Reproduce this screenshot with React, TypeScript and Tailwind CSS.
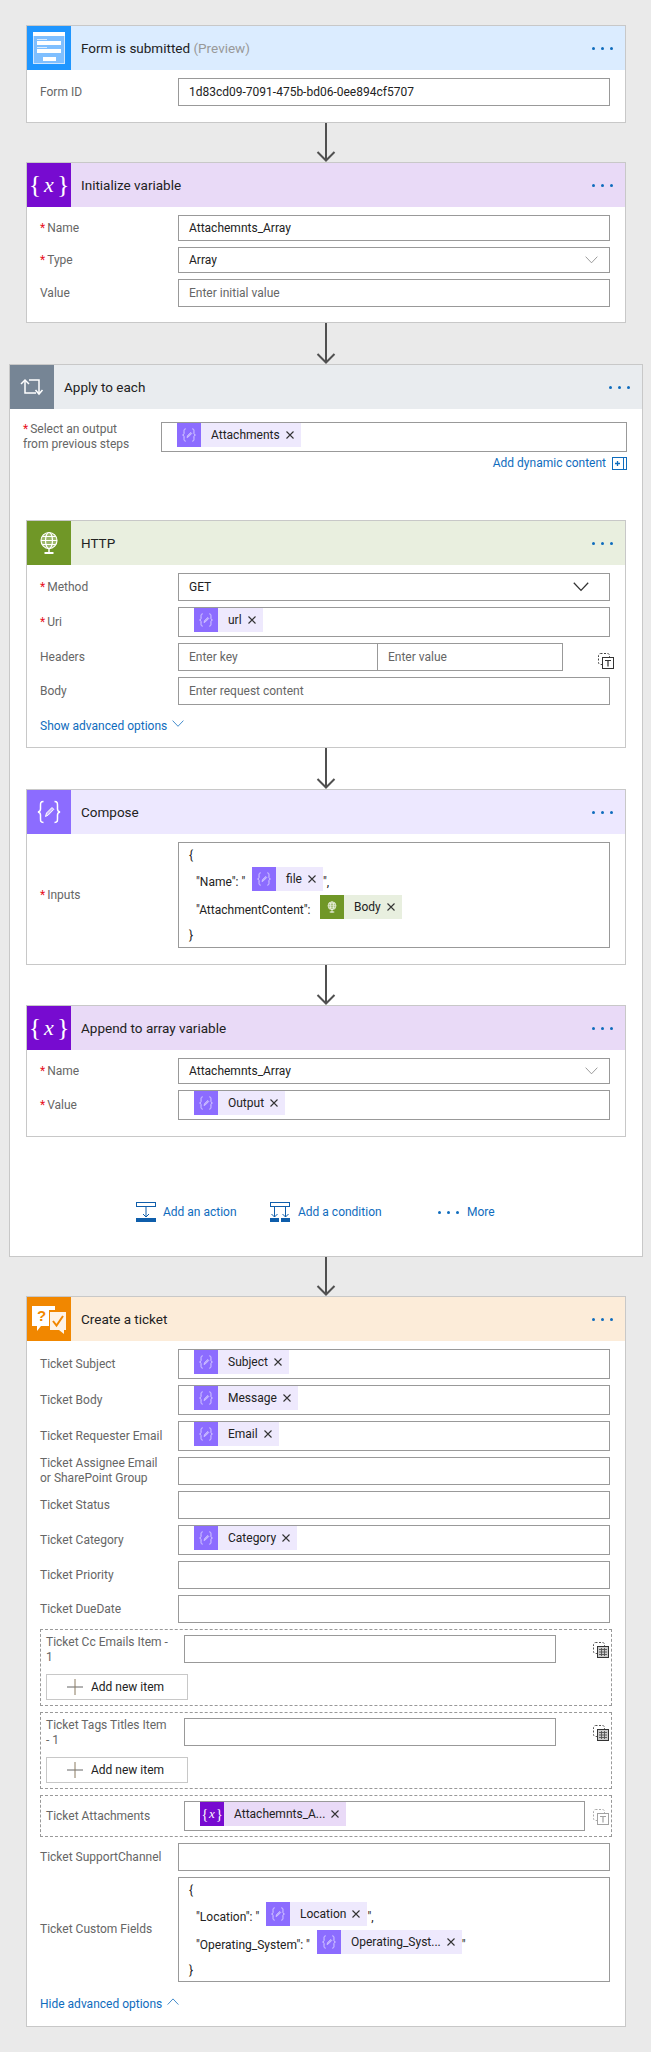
import React from 'react';

const FONT = "font-['Roboto',sans-serif]";

const Dots = () => (
    <div className="flex gap-[6px] pr-3">
        <div className="w-[3px] h-[3px] rounded-full bg-[#0f6cbd]"></div>
        <div className="w-[3px] h-[3px] rounded-full bg-[#0f6cbd]"></div>
        <div className="w-[3px] h-[3px] rounded-full bg-[#0f6cbd]"></div>
    </div>
);

const Arrow = ({ h }: { h: number }) => (
    <div className="flex justify-center pl-[1px]">
        <svg width="20" height={h} viewBox={`0 0 20 ${h}`} fill="none" stroke="#505050" strokeWidth="2">
            <path d={`M10 0V${h - 1}`} />
            <path d={`M1.5 ${h - 10}L10 ${h - 1.5}L18.500 ${h - 10}`} />
        </svg>
    </div>
);

const Braces = ({ size, color = 'white', op = 1 }: { size: number; color?: string; op?: number }) => (
    <svg width={size} height={size} viewBox="0 0 24 24" fill="none" stroke={color} strokeWidth="1.5" opacity={op}>
        <path d="M6.500 1.500C3.500 1.500 3.500 3 3.500 5.500V9C3.500 10.500 3 11.500 1 12C3 12.500 3.500 13.500 3.500 15V18.500C3.500 21 3.500 22.500 6.500 22.500" />
        <path d="M17.500 1.500C20.500 1.500 20.500 3 20.500 5.500V9C20.500 10.500 21 11.500 23 12C21 12.500 20.500 13.500 20.500 15V18.500C20.500 21 20.500 22.500 17.500 22.500" />
        <path d="M8.500 16.500L9.500 13L15 7.500L16.800 9.300L11.300 15L8.500 16.500Z" fill={color} fillOpacity="0.55" strokeWidth="1" />
    </svg>
);

const FormIcon = () => (
    <svg width="44" height="44" viewBox="0 0 44 44">
        <rect x="6.500" y="6.500" width="31" height="31" fill="#7fbfff" stroke="#cfe6ff" />
        <rect x="6" y="6" width="32" height="4" fill="white" />
        <rect x="10" y="13" width="10" height="1" fill="#d8ebff" />
        <rect x="10" y="15" width="24" height="4" fill="white" />
        <rect x="10" y="21" width="10" height="1" fill="#d8ebff" />
        <rect x="10" y="23" width="24" height="4" fill="white" />
        <rect x="16" y="31" width="13" height="4" fill="white" />
    </svg>
);

const VarIcon = ({ small }: { small?: boolean }) => (
    <div className={`flex items-center justify-center text-white font-['Liberation_Serif',serif] ${small ? 'text-[14px] gap-[1px]' : 'text-[26px] gap-[3px] pb-[2px]'}`}>
        <span>{'{'}</span>
        <span className={`italic ${small ? 'text-[13px]' : 'text-[22px]'}`}>x</span>
        <span>{'}'}</span>
    </div>
);

const LoopIcon = () => (
    <svg width="44" height="44" viewBox="0 0 44 44" fill="none" stroke="white" strokeWidth="1.500">
        <path d="M19 15H29V28" />
        <path d="M15 15V28H26" />
        <path d="M11 19L15 15L19 19" />
        <path d="M25.500 25L29 29L32.500 25" />
    </svg>
);

const GlobeIcon = ({ size }: { size: number }) => (
    <svg width={size} height={size} viewBox="0 0 44 44" fill="none" stroke="white" strokeWidth="1.200">
        <circle cx="22" cy="19.500" r="8" fill="#9db86a" />
        <ellipse cx="22" cy="19.500" rx="3.500" ry="8" />
        <path d="M14 19.500H30M15.500 15.500H28.500M15.500 23.500H28.500" />
        <path d="M22 27.500V33" strokeWidth="1.500" />
        <path d="M17.500 32H26.500" strokeWidth="2" />
    </svg>
);

const TicketIcon = () => (
    <svg width="44" height="44" viewBox="0 0 44 44">
        <path d="M5 9H28V13H22V29H14L10 34V29H5Z" fill="white" />
        <text x="10" y="24" fontSize="15" fontWeight="700" fontFamily="Liberation Sans" fill="#f18700">?</text>
        <path d="M23 15H39V33H37V37L32 33H23Z" fill="white" opacity="0.9" />
        <path d="M26 24L29.500 28.500L36 19" fill="none" stroke="#f18700" strokeWidth="2" />
    </svg>
);

const TableIcon = () => (
    <svg width="16" height="16" viewBox="0 0 16 16" fill="none">
        <rect x="0.500" y="0.500" width="11" height="11" rx="2" stroke="#555" strokeDasharray="2 1.500" />
        <rect x="4.500" y="4.500" width="11" height="11" fill="#ccc" stroke="#333" />
        <path d="M6 7.500H14M6 10H14M6 12.500H14M8.500 6V14M11.500 6V14" stroke="#555" strokeWidth="0.900" />
    </svg>
);

const TextModeIcon = ({ faded }: { faded?: boolean }) => (
    <svg width="16" height="16" viewBox="0 0 16 16" fill="none" opacity={faded ? 0.45 : 1}>
        <rect x="0.500" y="0.500" width="11" height="11" rx="2" stroke="#444" strokeDasharray="2 1.500" />
        <rect x="4.500" y="4.500" width="11" height="11" fill="white" stroke="#333" />
        <path d="M7 7.500H13M10 7.500V13.500" stroke="#333" strokeWidth="1.200" />
    </svg>
);

const ActionIcon = ({ double }: { double?: boolean }) => (
    <svg width="20" height="20" viewBox="0 0 20 20" fill="none" stroke="#0f5eab">
        <rect x="0.500" y="0.500" width="19" height="4" />
        {double ? (
            <>
                <path d="M4.500 5V15M1.500 12L4.500 15L7.500 12M15.500 5V15M12.500 12L15.500 15L18.500 12" />
                <rect x="0" y="16" width="9" height="4" fill="#0f5eab" stroke="none" />
                <rect x="11" y="16" width="9" height="4" fill="#0f5eab" stroke="none" />
            </>
        ) : (
            <>
                <path d="M10 5V15M7 12L10 15L13 12" />
                <rect x="0" y="16" width="20" height="4" fill="#0f5eab" stroke="none" />
            </>
        )}
    </svg>
);

const Chevron = ({ w, color, up }: { w: number; color: string; up?: boolean }) => (
    <svg width={w} height={w * 0.6} viewBox="0 0 20 12" fill="none" stroke={color} strokeWidth={w > 13 ? 1.600 : 1.300}>
        <path d={up ? 'M1 11L10 1.500L19 11' : 'M1 1L10 10.500L19 1'} />
    </svg>
);

type TokenKind = 'compose' | 'variable' | 'http';

const Token = ({ label, kind = 'compose' }: { label: string; kind?: TokenKind }) => {
    const styles: Record<TokenKind, string> = {
        compose: 'bg-[#eee9fd]',
        variable: 'bg-[#e9daf7]',
        http: 'bg-[#e8efdf]',
    };
    const icons: Record<TokenKind, string> = {
        compose: 'bg-[#8c6cff]',
        variable: 'bg-[#770bd0]',
        http: 'bg-[#709727]',
    };
    return (
        <div className={`flex items-center h-6 shrink-0 ${styles[kind]}`}>
            <div className={`w-6 h-6 flex items-center justify-center ${icons[kind]}`}>
                {kind === 'compose' && <Braces size={14} op={0.75} />}
                {kind === 'variable' && <VarIcon small />}
                {kind === 'http' && <GlobeIcon size={22} />}
            </div>
            <span className="pl-[10px] text-[#222] whitespace-nowrap">{label}</span>
            <svg className="ml-[6px] mr-[7px]" width="8" height="8" viewBox="0 0 8 8" stroke="#333" strokeWidth="1.100">
                <path d="M0.500 0.500L7.500 7.500M7.500 0.500L0.500 7.500" />
            </svg>
        </div>
    );
};

const Box = ({ h, w = 'w-[432px]', value, placeholder, chevron, children }: { h: number; w?: string; value?: string; placeholder?: string; chevron?: React.ReactNode; children?: React.ReactNode }) => (
    <div className={`${w} flex items-center border border-[#999] bg-white shrink-0 ${h === 30 ? 'h-[30px]' : h === 26 ? 'h-[26px]' : 'h-7'}`}>
        {value && <span className="pl-[10px] text-[#222]">{value}</span>}
        {placeholder && <span className="pl-[10px] text-[#666]">{placeholder}</span>}
        {chevron && <div className="ml-auto">{chevron}</div>}
        {children}
    </div>
);

const TokenBox = ({ label, kind, w, inset = 'pl-[15px]' }: { label: string; kind?: TokenKind; w?: string; inset?: string }) => (
    <div className={`${w ?? 'w-[432px]'} h-[30px] flex items-start ${inset} border border-[#999] bg-white shrink-0`}>
        <Token label={label} kind={kind} />
    </div>
);

const Label = ({ text, required, w = 'w-[138px]' }: { text: React.ReactNode; required?: boolean; w?: string }) => (
    <div className={`${w} shrink-0 text-[#666] leading-[15px]`}>
        {required && <span className="text-[#e81123] mr-[2px]">*</span>}
        {text}
    </div>
);

const Row = ({ label, required, children }: { label: React.ReactNode; required?: boolean; children: React.ReactNode }) => (
    <div className="flex items-center pl-[13px]">
        <Label text={label} required={required} />
        {children}
    </div>
);

const Card = ({ head, iconBg, icon, title, suffix, children }: { head: string; iconBg: string; icon: React.ReactNode; title: string; suffix?: string; children: React.ReactNode }) => (
    <div className="w-[600px] ml-[26px] border border-[#c8c8c8] bg-white">
        <div className={`flex items-center h-11 ${head}`}>
            <div className={`w-11 h-11 flex items-center justify-center ${iconBg}`}>{icon}</div>
            <div className="pl-[10px] text-[13.500px] text-[#222]">
                {title}
                {suffix && <span className="text-[#999]"> {suffix}</span>}
            </div>
            <div className="ml-auto"><Dots /></div>
        </div>
        {children}
    </div>
);

const AddItem = () => (
    <button className="flex items-center w-[142px] h-[26px] border border-[#c8c8c8] bg-white text-[#222] ml-[5px] mt-[11px]">
        <svg className="ml-[20px]" width="16" height="16" viewBox="0 0 16 16" stroke="#666">
            <path d="M0 8H16" />
            <path d="M8 0V16" stroke="#8a7a60" />
        </svg>
        <span className="ml-2">Add new item</span>
    </button>
);

const ArrayGroup = ({ label }: { label: React.ReactNode }) => (
    <div className="w-[572px] ml-[13px] h-[77px] border border-dashed border-[#999] pt-[5px]">
        <div className="flex items-start h-7 pl-[5px]">
            <Label text={label} />
            <Box h={28} w="w-[372px]" />
            <div className="ml-[37px] mt-[7px]"><TableIcon /></div>
        </div>
        <AddItem />
    </div>
);

const App: React.FC = () => {
    return (
        <div className={`w-[651px] h-[2052px] bg-[#eaeaea] pt-[25px] text-[12px] overflow-hidden ${FONT}`}>
            <Card head="bg-[#dbecff]" iconBg="bg-[#1f96ff]" icon={<FormIcon />} title="Form is submitted" suffix="(Preview)">
                <div className="pt-2 pb-4">
                    <Row label="Form ID"><Box h={28} value="1d83cd09-7091-475b-bd06-0ee894cf5707" /></Row>
                </div>
            </Card>
            <Arrow h={39} />
            <Card head="bg-[#e9daf7]" iconBg="bg-[#770bd0]" icon={<VarIcon />} title="Initialize variable">
                <div className="flex flex-col gap-[6px] pt-2 pb-[15px]">
                    <Row label="Name" required><Box h={26} value="Attachemnts_Array" /></Row>
                    <Row label="Type" required>
                        <Box h={26} value="Array" chevron={<div className="pr-[11px]"><Chevron w={13} color="#888" /></div>} />
                    </Row>
                    <Row label="Value"><Box h={28} placeholder="Enter initial value" /></Row>
                </div>
            </Card>
            <Arrow h={41} />

            <div className="w-[634px] ml-[9px] h-[893px] border border-[#c8c8c8] bg-white">
                <div className="flex items-center h-11 bg-[#e9ecef]">
                    <div className="w-11 h-11 flex items-center justify-center bg-[#768595]"><LoopIcon /></div>
                    <div className="pl-[10px] text-[13.500px] text-[#222]">Apply to each</div>
                    <div className="ml-auto"><Dots /></div>
                </div>
                <div className="flex items-center pl-[13px] pt-[13px]">
                    <Label text={<>Select an output<br />from previous steps</>} required />
                    <TokenBox label="Attachments" w="w-[466px]" />
                </div>
                <div className="flex justify-end items-center gap-[6px] h-[16px] mt-[3px] pr-[15px] text-[#0f6cbd]">
                    <span>Add dynamic content</span>
                    <svg width="15" height="13" viewBox="0 0 15 13" fill="none" stroke="#0f6cbd">
                        <rect x="0.500" y="0.500" width="14" height="12" />
                        <path d="M11.500 1V12" />
                        <path d="M3 6.500H8M5.500 4V9" strokeWidth="1.300" />
                    </svg>
                </div>
                <div className="mt-[49px] -ml-[10px] w-[651px]">
                    <Card head="bg-[#e9efdf]" iconBg="bg-[#709727]" icon={<GlobeIcon size={44} />} title="HTTP">
                        <div className="flex flex-col gap-[6px] pt-2">
                            <Row label="Method" required>
                                <Box h={28} value="GET" chevron={<div className="pr-[20px]"><Chevron w={16} color="#333" /></div>} />
                            </Row>
                            <Row label="Uri" required><TokenBox label="url" /></Row>
                            <Row label="Headers">
                                <div className="w-[385px] h-7 flex items-center border border-[#999] text-[#666]">
                                    <div className="w-[199px] h-full flex items-center pl-[10px] border-r border-[#999]">Enter key</div>
                                    <div className="pl-[10px]">Enter value</div>
                                </div>
                                <div className="ml-[35px] mt-[8px]"><TextModeIcon /></div>
                            </Row>
                            <Row label="Body"><Box h={28} placeholder="Enter request content" /></Row>
                        </div>
                        <div className="flex items-center gap-[5px] pl-[13px] h-[42px] text-[#0f6cbd]">
                            <span>Show advanced options</span>
                            <div className="pb-[5px]"><Chevron w={12} color="#0f6cbd" /></div>
                        </div>
                    </Card>
                    <Arrow h={41} />
                    <Card head="bg-[#ede8ff]" iconBg="bg-[#8c6cff]" icon={<Braces size={24} />} title="Compose">
                        <div className="pt-2 pb-4">
                            <Row label="Inputs" required>
                                <div className="w-[432px] h-[106px] border border-[#999] pl-[10px] text-[#222]">
                                    <div className="h-6 leading-[24px]">{'{'}</div>
                                    <div className="flex items-end h-6 pl-[7px]">
                                        <span className="w-[56px]">"Name": "</span>
                                        <Token label="file" />
                                        <span>",</span>
                                    </div>
                                    <div className="flex items-end h-6 mt-1 pl-[7px]">
                                        <span className="w-[124px]">"AttachmentContent":</span>
                                        <Token label="Body" kind="http" />
                                    </div>
                                    <div className="h-6 mt-1 leading-[24px]">{'}'}</div>
                                </div>
                            </Row>
                        </div>
                    </Card>
                    <Arrow h={40} />
                    <Card head="bg-[#e9daf7]" iconBg="bg-[#770bd0]" icon={<VarIcon />} title="Append to array variable">
                        <div className="flex flex-col gap-[6px] pt-2 pb-4">
                            <Row label="Name" required>
                                <Box h={26} value="Attachemnts_Array" chevron={<div className="pr-[11px]"><Chevron w={13} color="#888" /></div>} />
                            </Row>
                            <Row label="Value" required><TokenBox label="Output" /></Row>
                        </div>
                    </Card>
                </div>
                <div className="flex items-center h-5 mt-[65px] pl-[126px] text-[#0f6cbd]">
                    <ActionIcon />
                    <span className="ml-[7px] w-[73px] whitespace-nowrap">Add an action</span>
                    <div className="ml-[34px]"><ActionIcon double /></div>
                    <span className="ml-2 w-[84px] whitespace-nowrap">Add a condition</span>
                    <div className="flex gap-[6px] ml-[56px]">
                        <div className="w-[3px] h-[3px] rounded-full bg-[#0f6cbd]"></div>
                        <div className="w-[3px] h-[3px] rounded-full bg-[#0f6cbd]"></div>
                        <div className="w-[3px] h-[3px] rounded-full bg-[#0f6cbd]"></div>
                    </div>
                    <span className="ml-2">More</span>
                </div>
            </div>

            <Arrow h={39} />
            <Card head="bg-[#fcecd9]" iconBg="bg-[#f18700]" icon={<TicketIcon />} title="Create a ticket">
                <div className="flex flex-col gap-[6px] pt-2">
                    <Row label="Ticket Subject"><TokenBox label="Subject" /></Row>
                    <Row label="Ticket Body"><TokenBox label="Message" /></Row>
                    <Row label="Ticket Requester Email"><TokenBox label="Email" /></Row>
                    <div className="h-7 flex items-center">
                        <Row label={<>Ticket Assignee Email<br />or SharePoint Group</>}><Box h={28} /></Row>
                    </div>
                    <Row label="Ticket Status"><Box h={28} /></Row>
                    <Row label="Ticket Category"><TokenBox label="Category" /></Row>
                    <Row label="Ticket Priority"><Box h={28} /></Row>
                    <Row label="Ticket DueDate"><Box h={28} /></Row>
                    <ArrayGroup label={<>Ticket Cc Emails Item -<br />1</>} />
                    <ArrayGroup label={<>Ticket Tags Titles Item<br />- 1</>} />
                    <div className="w-[572px] ml-[13px] h-[42px] border border-dashed border-[#999] flex items-center pl-[5px]">
                        <Label text="Ticket Attachments" />
                        <div className="w-[401px] h-[30px] flex items-start pl-[15px] border border-[#999] shrink-0">
                            <Token label="Attachemnts_A..." kind="variable" />
                        </div>
                        <div className="ml-[8px] mt-[1px]"><TextModeIcon faded /></div>
                    </div>
                    <Row label="Ticket SupportChannel"><Box h={28} /></Row>
                    <Row label="Ticket Custom Fields">
                        <div className="w-[432px] h-[105px] border border-[#999] pl-[10px] text-[#222]">
                            <div className="h-6 leading-[24px]">{'{'}</div>
                            <div className="flex items-end h-6 pl-[7px]">
                                <span className="w-[70px]">"Location": "</span>
                                <Token label="Location" />
                                <span>",</span>
                            </div>
                            <div className="flex items-end h-6 mt-1 pl-[7px]">
                                <span className="w-[121px]">"Operating_System": "</span>
                                <Token label="Operating_Syst..." />
                                <span>"</span>
                            </div>
                            <div className="h-6 mt-1 leading-[24px]">{'}'}</div>
                        </div>
                    </Row>
                </div>
                <div className="flex items-center gap-[5px] pl-[13px] h-[44px] text-[#0f6cbd]">
                    <span>Hide advanced options</span>
                    <div className="pb-[5px]"><Chevron w={12} color="#0f6cbd" up /></div>
                </div>
            </Card>
        </div>
    );
};

export default App;
